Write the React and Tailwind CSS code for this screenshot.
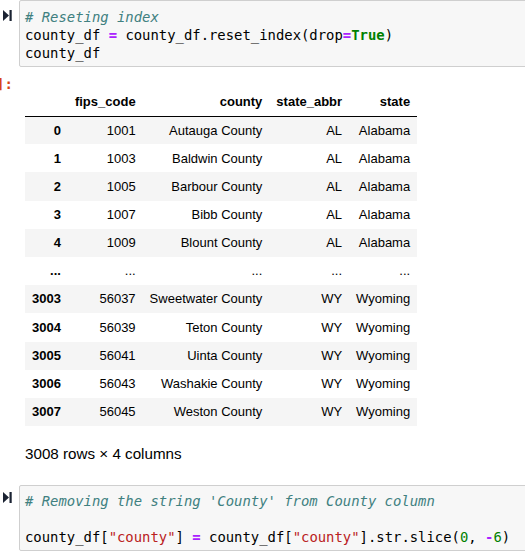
const mono = "font-['DejaVu_Sans_Mono',monospace]";

const rows = [
  ["0", "1001", "Autauga County", "AL", "Alabama"],
  ["1", "1003", "Baldwin County", "AL", "Alabama"],
  ["2", "1005", "Barbour County", "AL", "Alabama"],
  ["3", "1007", "Bibb County", "AL", "Alabama"],
  ["4", "1009", "Blount County", "AL", "Alabama"],
  ["...", "...", "...", "...", "..."],
  ["3003", "56037", "Sweetwater County", "WY", "Wyoming"],
  ["3004", "56039", "Teton County", "WY", "Wyoming"],
  ["3005", "56041", "Uinta County", "WY", "Wyoming"],
  ["3006", "56043", "Washakie County", "WY", "Wyoming"],
  ["3007", "56045", "Weston County", "WY", "Wyoming"],
];

const headers = ["", "fips_code", "county", "state_abbr", "state"];

function RunIcon() {
  return (
    <svg width="9" height="11" viewBox="0 0 9 11">
      <polygon points="0,0 6,5.5 0,11" fill="#1b2333" />
      <rect x="6.5" y="0" width="2.2" height="11" fill="#1b2333" />
    </svg>
  );
}

/* ================= CODE CELL ================= */
function CodeCell({ iconTop, padTop, children }) {
  return (
    <div className="flex">
      <div className={`w-[19px] shrink-0 pl-[3px] ${iconTop}`}>
        <RunIcon />
      </div>
      <div
        className={`flex-1 -mr-[10px] bg-[#f7f7f7] border border-[#cfcfcf] rounded-[2px] pl-[5px] pb-[4px] ${padTop} ${mono} text-[13.9px] leading-[18px] text-black whitespace-pre`}
      >
        {children}
      </div>
    </div>
  );
}

export default function App() {
  return (
    <div className="w-[525px] h-[558px] overflow-hidden bg-white font-['Liberation_Sans',Arial,sans-serif]">
      <CodeCell iconTop="pt-[10px]" padTop="pt-[7px]">
        <div className="italic text-[#408080]"># Reseting index</div>
        <div>
          county_df <span className="font-bold text-[#aa22ff]">=</span> county_df.reset_index(drop
          <span className="font-bold text-[#aa22ff]">=</span>
          <span className="font-bold text-[#008000]">True</span>)
        </div>
        <div>county_df</div>
      </CodeCell>

      {/* ================= OUTPUT ================= */}
      <div className="flex">
        <div className="w-[19px] shrink-0 pt-[8px] overflow-hidden">
          <span className={`block -ml-[4px] ${mono} font-bold text-[14px] leading-[18px] text-[#d84315]`}>]:</span>
        </div>
        <div className="pl-[6px] pt-[21px]">
          <table className="border-collapse text-[13px] text-black">
            <thead>
              <tr>
                {headers.map((h, i) => (
                  <th
                    key={i}
                    className="h-[28px] px-[7px] py-0 text-right font-bold border-b border-black whitespace-nowrap"
                  >
                    {h}
                  </th>
                ))}
              </tr>
            </thead>
            <tbody>
              {rows.map((r, i) => (
                <tr key={i} className={i % 2 === 0 ? "bg-[#f5f5f5]" : "bg-white"}>
                  {r.map((c, j) => (
                    <td
                      key={j}
                      className={`h-[28.2px] px-[7px] py-0 text-right whitespace-nowrap ${j === 0 ? "font-bold" : ""}`}
                    >
                      {c}
                    </td>
                  ))}
                </tr>
              ))}
            </tbody>
          </table>
          <p className="mt-[19px] text-[15.2px] leading-[18px] text-black">3008 rows × 4 columns</p>
        </div>
      </div>

      <div className="mt-[22px]">
        <CodeCell iconTop="pt-[7px]" padTop="pt-[6px]">
          <div className="italic text-[#408080]"># Removing the string 'County' from County column</div>
          <div>&nbsp;</div>
          <div>
            county_df[<span className="text-[#ba2121]">"county"</span>]{" "}
            <span className="font-bold text-[#aa22ff]">=</span> county_df[
            <span className="text-[#ba2121]">"county"</span>].str.slice(
            <span className="text-[#008000]">0</span>,{" "}
            <span className="font-bold text-[#aa22ff]">-</span>
            <span className="text-[#008000]">6</span>)
          </div>
        </CodeCell>
      </div>
    </div>
  );
}
